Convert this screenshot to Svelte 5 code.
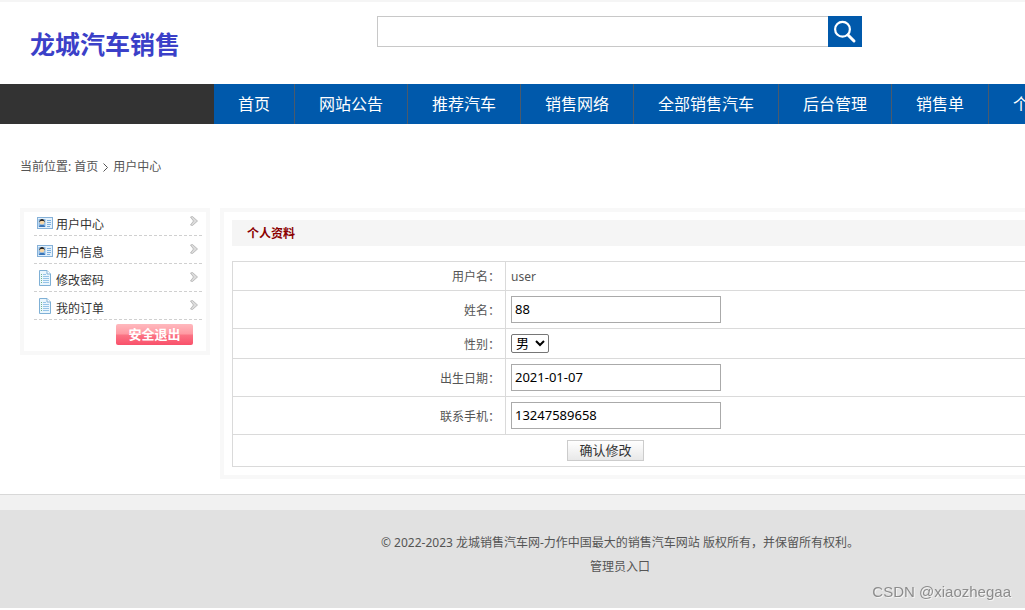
<script lang="ts">
  const navItems = ['首页', '网站公告', '推荐汽车', '销售网络', '全部销售汽车', '后台管理', '销售单', '个人中心'];

  const menu = [
    { label: '用户中心', icon: 'card' },
    { label: '用户信息', icon: 'card' },
    { label: '修改密码', icon: 'doc' },
    { label: '我的订单', icon: 'doc' },
  ];

  let keyword = $state('');
  let name = $state('88');
  let gender = $state('男');
  let birthday = $state('2021-01-07');
  let mobile = $state('13247589658');
</script>

<div class="page">
  <header class="header">
    <a class="logo" href="#home">龙城汽车销售</a>
    <form class="search" onsubmit={(e) => e.preventDefault()}>
      <input type="text" aria-label="搜索" bind:value={keyword} />
      <button type="submit" aria-label="搜索">
        <svg width="34" height="31" viewBox="0 0 34 31">
          <circle cx="14.5" cy="13.2" r="7.4" fill="none" stroke="#fff" stroke-width="2.2" />
          <path d="M20 19l6 6" stroke="#fff" stroke-width="3" stroke-linecap="round" />
        </svg>
      </button>
    </form>
  </header>

  <nav class="nav">
    {#each navItems as item}
      <a href="#nav">{item}</a>
    {/each}
  </nav>

  <div class="crumbs">
    <span>当前位置: <a href="#home">首页</a></span>
    <svg width="5" height="9" viewBox="0 0 5 9">
      <path d="M.5 .5l4 4-4 4" fill="none" stroke="#555" />
    </svg>
    <span>用户中心</span>
  </div>

  <div class="content">
    <aside class="side">
      <ul>
        {#each menu as item}
          <li>
            <a href="#menu">
              {#if item.icon === 'card'}
                <svg class="icon" width="16" height="16" viewBox="0 0 16 16">
                  <rect x=".5" y="2.5" width="15" height="11" fill="#e3f1fc" stroke="#86b1d8" />
                  <rect x="1.5" y="4" width="7" height="8" fill="#8dbbe6" />
                  <path d="M2 12c0-3 6-3 6 0z" fill="#3974b8" />
                  <circle cx="5" cy="7.2" r="2.4" fill="#f7d7a8" />
                  <path d="M2.4 7.5c-.6-4.8 5.8-4.8 5.2 0L6.6 6H3.6z" fill="#2b2622" />
                  <path d="M10 5.5h4M10 7.5h4M10 9.5h4M10 11.5h3" stroke="#7fb0de" />
                </svg>
              {:else}
                <svg class="icon doc" width="16" height="16" viewBox="0 0 16 16">
                  <path d="M2.5 .5h7.5l3.5 3.5v11.5h-11z" fill="#eaf6fd" stroke="#7fb0d6" />
                  <path d="M10 .5v3.5h3.5" fill="#fff" stroke="#7fb0d6" />
                  <path d="M4 4.5h1M4 6.5h1M4 8.5h1M4 10.5h1M4 12.5h1" stroke="#6fb58a" />
                  <path d="M6 4.5h3M6 6.5h6M6 8.5h6M6 10.5h6M6 12.5h6" stroke="#96c4e8" />
                </svg>
              {/if}
              <span>{item.label}</span>
              <svg class="arrow" width="8" height="10" viewBox="0 0 8 10">
                <path d="M.5 1l2-.5 5 4.5-5 4.5-2-.5 3-4z" fill="#dcdcdc" stroke="#b0b0b0" stroke-width=".8" />
              </svg>
            </a>
          </li>
        {/each}
      </ul>
      <button class="logout" type="button">安全退出</button>
    </aside>

    <main class="main">
      <h1>个人资料</h1>
      <form onsubmit={(e) => e.preventDefault()}>
        <table>
          <tbody>
            <tr class="plain">
              <th scope="row">用户名：</th>
              <td>user</td>
            </tr>
            <tr>
              <th scope="row"><label for="name">姓名：</label></th>
              <td><input id="name" type="text" bind:value={name} /></td>
            </tr>
            <tr class="short">
              <th scope="row"><label for="gender">性别：</label></th>
              <td>
                <select id="gender" bind:value={gender}>
                  <option>男</option>
                  <option>女</option>
                </select>
              </td>
            </tr>
            <tr>
              <th scope="row"><label for="birthday">出生日期：</label></th>
              <td><input id="birthday" type="text" bind:value={birthday} /></td>
            </tr>
            <tr>
              <th scope="row"><label for="mobile">联系手机：</label></th>
              <td><input id="mobile" type="text" bind:value={mobile} /></td>
            </tr>
            <tr class="actions">
              <td colspan="2"><button type="submit">确认修改</button></td>
            </tr>
          </tbody>
        </table>
      </form>
    </main>
  </div>

  <footer class="footer">
    <p>© 2022-2023 龙城销售汽车网-力作中国最大的销售汽车网站 版权所有，并保留所有权利。</p>
    <p><a href="#admin">管理员入口</a></p>
  </footer>
</div>
<div class="watermark">CSDN @xiaozhegaa</div>

<style>
  :global(body) {
    margin: 0;
    overflow-x: hidden;
    background: #fff;
  }

  .page {
    min-width: 1240px;
    border-top: 2px solid #f5f5f5;
    box-sizing: border-box;
    font: 12px/24px "Noto Sans", "Noto Sans CJK SC", sans-serif;
    color: #555;
  }

  a {
    color: inherit;
    text-decoration: none;
  }

  input,
  select,
  button {
    box-sizing: border-box;
    margin: 0;
    font-family: "Noto Sans", "Noto Sans CJK SC", sans-serif;
  }

  .header {
    display: flex;
    align-items: flex-start;
    height: 82px;
    padding-left: 30px;
    box-sizing: border-box;
  }

  .logo {
    width: 347px;
    margin-top: 26px;
    font-size: 25px;
    line-height: 32px;
    font-weight: 700;
    color: #3b40c8;
  }

  .search {
    display: flex;
    margin-top: 14px;
  }

  .search input {
    width: 451px;
    height: 31px;
    padding: 0 8px;
    border: 1px solid #c8c8c8;
    border-right: 0;
    border-radius: 0;
    font-size: 14px;
  }

  .search button {
    width: 34px;
    height: 31px;
    padding: 0;
    border: 0;
    background: #0059ab;
    cursor: pointer;
  }

  .search svg {
    display: block;
  }

  .nav {
    display: flex;
    padding-left: 214px;
    background: linear-gradient(to right, #333 214px, #0059ab 214px);
  }

  .nav a {
    padding: 0 24px;
    border-right: 1px solid #4a5a6c;
    font-size: 16px;
    line-height: 40px;
    color: #fff;
    white-space: nowrap;
  }

  .crumbs {
    display: flex;
    align-items: center;
    gap: 5px;
    padding: 31px 20px 29px;
  }

  .content {
    display: flex;
    align-items: flex-start;
    gap: 10px;
    padding: 0 20px 16px;
  }

  .side {
    width: 190px;
    padding: 0 4px 6px 10px;
    border: 4px solid #f8f8f8;
    box-sizing: border-box;
  }

  .side ul {
    margin: 0;
    padding: 0;
    list-style: none;
  }

  .side li {
    height: 28px;
    box-sizing: border-box;
    border-bottom: 1px dashed #d0d0d0;
  }

  .side li:first-child {
    height: 24px;
  }

  .side a {
    display: flex;
    align-items: flex-end;
    height: 100%;
    padding: 0 4px 0 3px;
    box-sizing: border-box;
    color: #333;
  }

  .side span {
    flex: 1;
    margin-left: 3px;
    line-height: 21px;
  }

  .icon {
    margin-bottom: 4px;
  }

  .icon.doc {
    margin-bottom: 5px;
  }

  .arrow {
    margin-bottom: 9px;
  }

  .logout {
    display: block;
    width: 77px;
    height: 21px;
    margin: 4px 9px 0 auto;
    padding: 0;
    border: 0;
    border-radius: 2px;
    background: linear-gradient(#ffb9be, #ff9aa3 46%, #fb7384 54%, #f9506a);
    font-size: 13px;
    line-height: 21px;
    font-weight: 700;
    color: #fff;
    cursor: pointer;
  }

  .main {
    flex: 1;
    padding: 8px;
    border: 4px solid #f8f8f8;
  }

  .main h1 {
    margin: 0 0 15px;
    padding: 2px 0 0 15px;
    background: #f5f5f5;
    font-size: 12px;
    line-height: 24px;
    color: #8b0000;
  }

  table {
    width: 100%;
    border-collapse: collapse;
  }

  tr {
    height: 38px;
  }

  .plain {
    height: 29px;
  }

  .short {
    height: 30px;
  }

  th,
  td {
    padding: 0 5px;
    border: 1px solid #dadada;
    line-height: 20px;
  }

  th {
    width: 262px;
    padding-top: 2px;
    font-weight: 400;
    text-align: right;
  }

  .plain td {
    padding-top: 2px;
  }

  td input {
    display: block;
    width: 210px;
    height: 27px;
    padding: 0 3px 2px;
    border: 1px solid #aaa;
    border-radius: 0;
    font-size: 13px;
    color: #000;
  }

  select {
    display: block;
    width: 38px;
    height: 19px;
    padding: 0;
    border: 1px solid #767676;
    border-radius: 2px;
    background: #fff;
    font-family: "Liberation Sans", "Noto Sans CJK SC", sans-serif;
    font-size: 13px;
    color: #000;
  }

  .actions {
    height: 32px;
  }

  .actions td {
    padding-left: 334px;
  }

  .actions button {
    display: block;
    width: 77px;
    height: 21px;
    padding: 0;
    border: 1px solid #ccc;
    background: linear-gradient(#fff, #e8e8e8);
    font-size: 13px;
    line-height: 19px;
    color: #333;
    cursor: pointer;
  }

  .footer {
    padding: 21px 0 29px;
    border-top: 15px solid #f1f1f1;
    box-shadow: 0 -1px #d8d8d8;
    background: #e1e1e1;
    text-align: center;
  }

  .footer p {
    margin: 0;
  }

  .watermark {
    position: fixed;
    right: 14px;
    bottom: 8px;
    font: 15px/20px "Liberation Sans", Arial, sans-serif;
    color: #8c8c8c;
    text-shadow: 1px 1px #f4f4f4;
  }
</style>
